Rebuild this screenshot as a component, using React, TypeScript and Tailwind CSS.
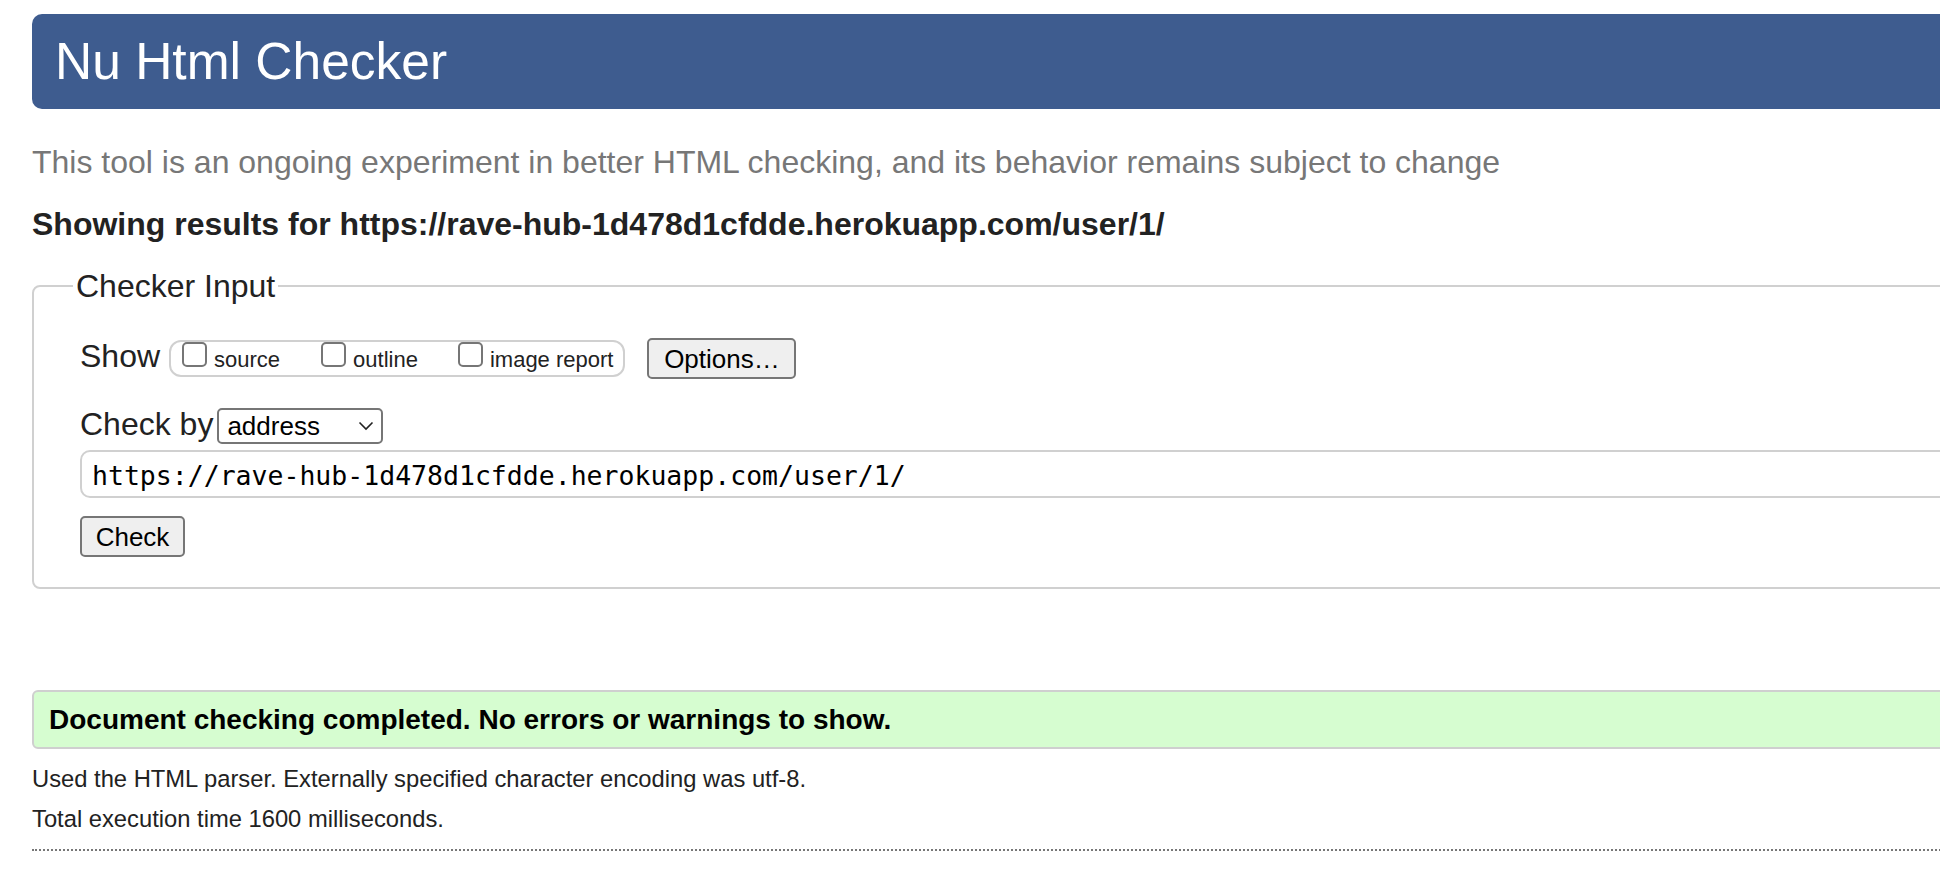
import React from "react";

function Box() {
  return (
    <span className="block w-[25px] h-[25px] shrink-0 rounded-[5px] border-2 border-[#767676] bg-white" />
  );
}

function Opt({ label, className = "" }: { label: string; className?: string }) {
  return (
    <label className={`flex items-baseline gap-[7px] ${className}`}>
      <Box />
      <span className="text-[22px] leading-[26px] text-[#222]">{label}</span>
    </label>
  );
}

export default function App() {
  return (
    <div className="min-h-[888px] w-full overflow-hidden bg-white font-['Liberation_Sans',Arial,Helvetica,sans-serif] text-[#222]">
      <div className="w-[2300px] pl-8">
        <header className="mt-[14px] h-[95px] rounded-[10px] bg-[#3e5c8f] pl-[23px] text-[51.5px] leading-[95px] text-white">
          Nu Html Checker
        </header>

        <p className="mt-[35px] text-[32px] leading-[36px] text-[#777]">
          This tool is an ongoing experiment in better HTML checking, and its behavior remains subject to change
        </p>

        <p className="mt-[26px] text-[32px] font-bold leading-[36px] text-[#222]">
          Showing results for https://rave-hub-1d478d1cfdde.herokuapp.com/user/1/
        </p>

        <fieldset className="mt-[27px] rounded-[8px] border-2 border-[#d0d0d0] pl-[39px] pt-[34px] pb-[30px]">
          <legend className="px-[3px] text-[32px] leading-[34px] text-[#222]">Checker Input</legend>
          <div className="pl-[7px]">
            <div className="flex h-[42px] items-center">
              <span className="mb-[5px] text-[32px]">Show</span>
              <div className="ml-[9px] flex h-[37px] items-start rounded-[12px] border-2 border-[#d0d0d0] pl-[11px] pr-[10px]">
                <Opt label="source" />
                <Opt label="outline" className="ml-[41px]" />
                <Opt label="image report" className="ml-[40px]" />
              </div>
              <button className="ml-[22px] h-[41px] w-[149px] rounded-[5px] border-2 border-[#767676] bg-[#efefef] text-[26px] text-black">
                Options…
              </button>
            </div>

            <div className="mt-[29px] flex h-[36px] items-center">
              <span className="mb-[4px] text-[32px]">Check by</span>
              <div className="ml-[4px] flex h-[36px] w-[166px] items-center justify-between rounded-[5px] border-2 border-[#767676] bg-white pl-[8px] pr-[7px]">
                <span className="text-[26px] text-black">address</span>
                <svg width="16" height="10" viewBox="0 0 16 10" fill="none">
                  <path d="M1.5 1.5 L8 8 L14.5 1.5" stroke="#222" strokeWidth="1.6" />
                </svg>
              </div>
            </div>

            <div className="mt-[6px] flex h-[48px] items-center rounded-[10px] border-2 border-[#d0d0d0] pl-[10px] pt-[3px]">
              <span className="font-['DejaVu_Sans_Mono',monospace] text-[26.5px] text-black">
                https://rave-hub-1d478d1cfdde.herokuapp.com/user/1/
              </span>
            </div>

            <button className="mt-[18px] block h-[41px] w-[105px] rounded-[5px] border-2 border-[#767676] bg-[#efefef] text-[26px] text-black">
              Check
            </button>
          </div>
        </fieldset>

        <div className="mt-[101px] flex h-[59px] items-center rounded-[6px] border-2 border-[#cfcfcf] bg-[#d6fdd0] pl-[15px] text-[28px] font-bold text-black">
          Document checking completed. No errors or warnings to show.
        </div>

        <p className="mt-[15px] text-[23.75px] leading-[30px] text-[#222]">
          Used the HTML parser. Externally specified character encoding was utf-8.
        </p>
        <p className="mt-[10px] text-[23.75px] leading-[30px] text-[#222]">
          Total execution time 1600 milliseconds.
        </p>

        <div className="mt-[15px] border-t-2 border-dotted border-[#777]" />
      </div>
    </div>
  );
}
